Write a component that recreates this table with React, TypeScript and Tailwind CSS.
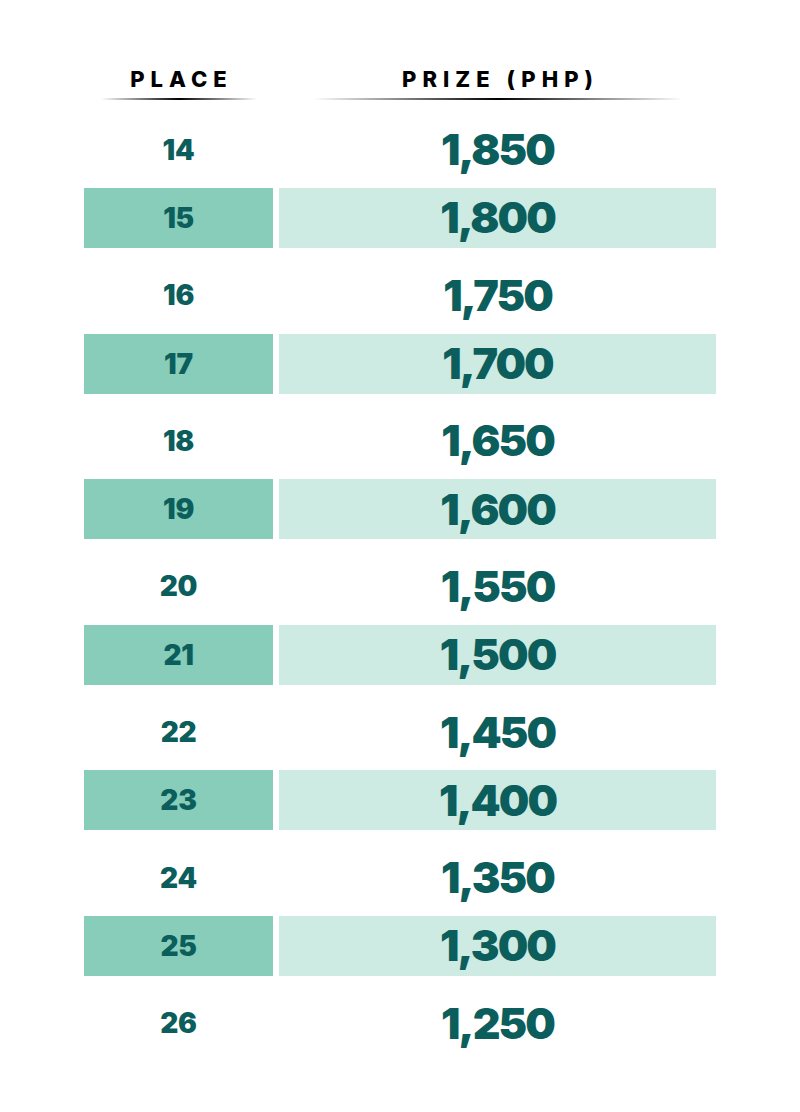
import React from "react";

const rows = [
  ["14", "1,850"],
  ["15", "1,800"],
  ["16", "1,750"],
  ["17", "1,700"],
  ["18", "1,650"],
  ["19", "1,600"],
  ["20", "1,550"],
  ["21", "1,500"],
  ["22", "1,450"],
  ["23", "1,400"],
  ["24", "1,350"],
  ["25", "1,300"],
  ["26", "1,250"],
];

export default function App() {
  return (
    <div
      className="w-[800px] h-[1112px] bg-white px-[84px] pt-[66px]"
      style={{ fontFamily: "Inter, 'Liberation Sans', sans-serif" }}
    >
      <div className="grid grid-cols-[189px_437px] gap-x-[6px] h-[36.4px]">
        <div className="flex flex-col items-center">
          <div className="h-[26px] leading-[26px] text-[22px] font-extrabold tracking-[6px] pl-[6px] text-black">
            PLACE
          </div>
          <div className="mt-[6px] h-[2px] w-[156px] bg-gradient-to-r from-transparent via-black to-transparent" />
        </div>
        <div className="flex flex-col items-center">
          <div className="h-[26px] leading-[26px] text-[22px] font-extrabold tracking-[6px] pl-[6px] text-black">
            PRIZE (PHP)
          </div>
          <div className="mt-[6px] h-[2px] w-[370px] bg-gradient-to-r from-transparent via-black to-transparent" />
        </div>
      </div>
      <div className="flex flex-col">
        {rows.map(([place, prize], i) => {
          const hl = i % 2 === 1;
          return (
            <div
              key={place}
              className={
                hl
                  ? "grid grid-cols-[189px_437px] gap-x-[6px] h-[60px] leading-none"
                  : "grid grid-cols-[189px_437px] gap-x-[6px] h-[85.6px] pt-[9px] leading-none"
              }
            >
              <div
                className={
                  (hl ? "bg-[#87cdb9] " : "") +
                  "flex items-center justify-center text-[28px] font-black text-[#0b5e5c] tracking-[-0.01em]"
                }
              >
                {place}
              </div>
              <div
                className={
                  (hl ? "bg-[#cdebe2] " : "") +
                  "flex items-center justify-center text-[43px] font-black text-[#0b5e5c] tracking-[-0.045em]"
                }
              >
                {prize}
              </div>
            </div>
          );
        })}
      </div>
    </div>
  );
}
